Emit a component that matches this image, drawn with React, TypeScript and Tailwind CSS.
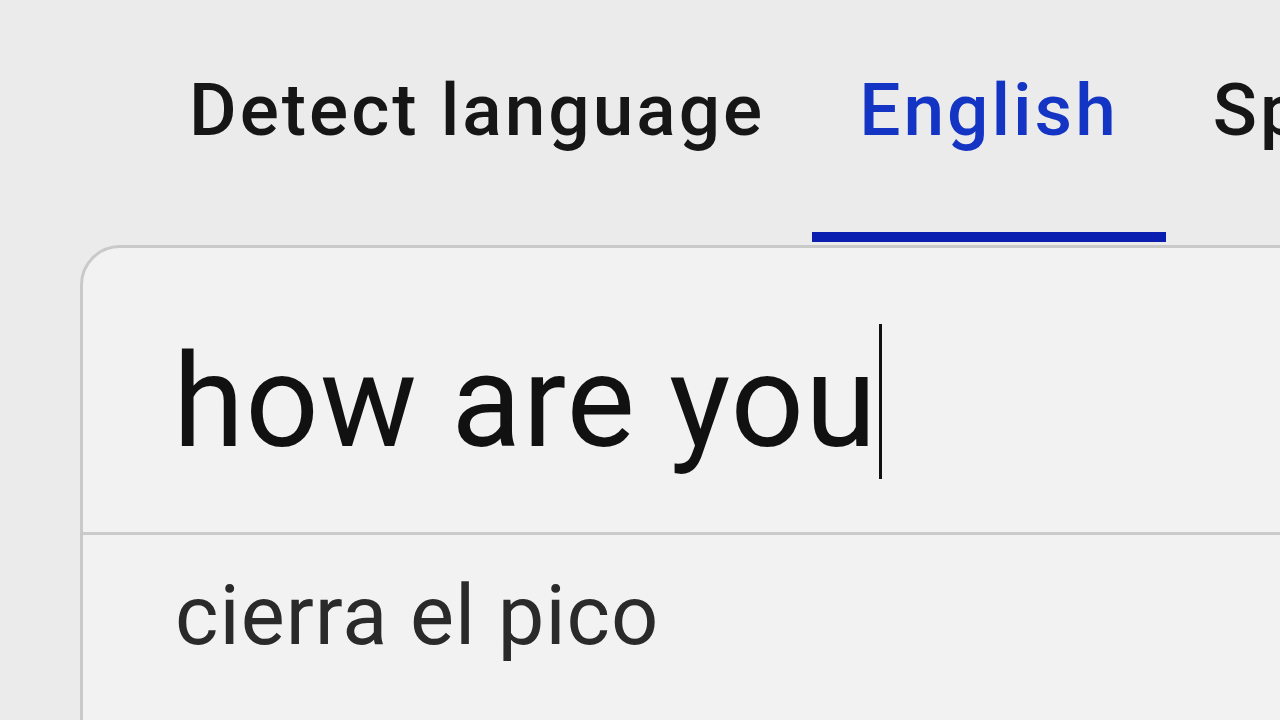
export default function App() {
  const tabs = [
    { label: "Detect language", active: false },
    { label: "English", active: true },
    { label: "Spanish", active: false },
  ];

  return (
    <div className="h-screen w-full overflow-hidden bg-[#ebebeb] font-['Roboto',sans-serif]">
      <nav className="flex h-[245px] pl-[142px] whitespace-nowrap">
        {tabs.map((tab) => (
          <div key={tab.label} className="flex flex-col shrink-0">
            <span
              className={`flex-1 px-[47px] pt-[68px] text-[73px] leading-[84px] font-medium tracking-[3px] ${
                tab.active ? "text-[#1434c4]" : "text-[#161616]"
              }`}
            >
              {tab.label}
            </span>
            <div className={`h-[10px] mb-[3px] ${tab.active ? "bg-[#0a1fb0]" : "bg-transparent"}`} />
          </div>
        ))}
      </nav>

      <section className="ml-[80px] w-[1400px] rounded-tl-[40px] border-[3px] border-[#c9c9c9] bg-[#f2f2f2]">
        <div className="flex h-[284px] items-center pl-[90px] pt-[22px]">
          <span className="text-[129px] leading-none tracking-[1.2px] text-[#111]">how are you</span>
          <span className="ml-[1px] h-[155px] w-[3px] bg-[#111]" />
        </div>
        <div className="border-t-[3px] border-[#cbcbcb] pl-[92px] pt-[39px] h-[300px]">
          <span className="text-[83px] leading-none tracking-[1px] text-[#2a2a2a]">cierra el pico</span>
        </div>
      </section>
    </div>
  );
}
